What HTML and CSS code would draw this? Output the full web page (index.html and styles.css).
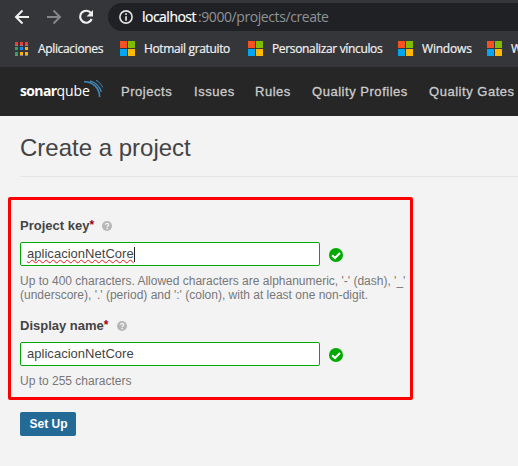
FILE: index.html
```html
<!DOCTYPE html>
<html lang="es">
<head>
<meta charset="utf-8">
<title>Create a project</title>
<link rel="stylesheet" href="styles.css">
</head>
<body>
<svg class="defs" width="0" height="0">
  <symbol id="ms" viewBox="0 0 15 15"><path fill="#f8501e" d="M0 0h7v7H0z"/><path fill="#80bb02" d="M8 0h7v7H8z"/><path fill="#02a5ef" d="M0 8h7v7H0z"/><path fill="#ffb902" d="M8 8h7v7H8z"/></symbol>
  <symbol id="help" viewBox="0 0 10 10"><circle cx="5" cy="5" r="5" fill="#b6b6b6"/><path d="M3.400 3.800C3.400 1.900 6.700 2 6.700 3.900 6.700 5 5.100 5 5.100 6.200M5.100 7v1.300" fill="none" stroke="#f3f3f3" stroke-width="1.400"/></symbol>
  <symbol id="ok" viewBox="0 0 14 14"><circle cx="7" cy="7" r="7" fill="#0a0"/><path d="M3.100 7.200l2.900 2.800 5-5" fill="none" stroke="#fff" stroke-width="2.100"/></symbol>
</svg>
<div class="toolbar">
  <svg class="controls" width="108" height="34" viewBox="0 0 108 34" fill="none" stroke-width="2">
    <path d="M29 17H16.500M22.500 10.500L16 17l6.500 6.500" stroke="#f1f1f1"/>
    <path d="M47 17h12.500M53.500 10.500L60 17l-6.500 6.500" stroke="#85868a"/>
    <path d="M91 13.200A6 6 0 1 0 91.700 19" stroke="#f1f1f1" stroke-width="2.200"/>
    <path d="M93 10v6.500h-6.500z" fill="#f1f1f1"/>
  </svg>
  <div class="address">
    <svg width="14" height="14" viewBox="0 0 14 14"><circle cx="7" cy="7" r="6.100" fill="none" stroke="#e4e4e4" stroke-width="1.600"/><path d="M6.200 3.300h1.700V5H6.200zM6.200 6.200h1.700v4.600H6.200z" fill="#e4e4e4"/></svg>
    <span class="host">localhost</span><span class="path">:9000/projects/create</span>
  </div>
</div>
<div class="bookmarks">
  <div class="bookmark apps">
    <svg width="13" height="14" viewBox="0 0 13 14"><path fill="#f23c35" d="M0 0h3v3H0zM5 0h3v3H5zM10 0h3v3h-3z"/><path fill="#2da55c" d="M0 5h3v3H0zM0 10h3v3H0z"/><path fill="#1e88f5" d="M5 5h3v3H5z"/><path fill="#fbb016" d="M10 5h3v3h-3zM5 10h3v3H5zM10 10h3v3h-3z"/><path fill="#858585" d="M0 3h3v1H0zM5 3h3v1H5zM10 3h3v1h-3zM0 13h3v1H0zM5 13h3v1H5zM10 13h3v1h-3z"/></svg>
    <span>Aplicaciones</span>
  </div>
  <div class="bookmark hotmail"><svg width="15" height="15"><use href="#ms"/></svg><span>Hotmail gratuito</span></div>
  <div class="bookmark links"><svg width="15" height="15"><use href="#ms"/></svg><span>Personalizar vínculos</span></div>
  <div class="bookmark windows"><svg width="15" height="15"><use href="#ms"/></svg><span>Windows</span></div>
  <div class="bookmark"><svg width="15" height="15"><use href="#ms"/></svg><span>W</span></div>
</div>
<nav class="nav">
  <div class="logo"><span class="sonar">sonar</span><span class="qube">qube</span>
    <svg width="20" height="18" viewBox="0 0 20 18" fill="none" stroke="#4289b8"><path d="M0 1.700C9 1.500 15.400 8 15.700 17" stroke-width="1.600"/><path d="M6 .8C12 2.500 16 7 17.500 12" stroke-width="1.200"/><path d="M12 .3c3.200 1.600 5.300 4 6.700 7" /></svg>
  </div>
  <a class="projects">Projects</a><a class="issues">Issues</a><a class="rules">Rules</a><a class="profiles">Quality Profiles</a><a class="gates">Quality Gates</a>
</nav>
<main class="page">
  <h1>Create a project</h1>
  <form>
    <div class="fields">
      <div class="field key">
        <label>Project key<em>*</em><svg width="10" height="10"><use href="#help"/></svg></label>
        <div class="control"><div class="input"><span class="typed">aplicacionNetCore</span><i class="caret"></i></div><svg width="14" height="14"><use href="#ok"/></svg></div>
        <p>Up to 400 characters. Allowed characters are alphanumeric, '-' (dash), '_'<br>(underscore), '.' (period) and ':' (colon), with at least one non-digit.</p>
      </div>
      <div class="field">
        <label>Display name<em>*</em><svg width="10" height="10"><use href="#help"/></svg></label>
        <div class="control"><div class="input"><span>aplicacionNetCore</span></div><svg width="14" height="14"><use href="#ok"/></svg></div>
        <p>Up to 255 characters</p>
      </div>
    </div>
    <button type="button">Set Up</button>
  </form>
</main>
</body>
</html>
```

FILE: styles.css
```css
* { box-sizing: border-box; }
body { margin: 0; height: 466px; overflow: hidden; background: #f3f3f3; color: #444; font-family: "Liberation Sans", Arial, sans-serif; font-size: 13px; white-space: nowrap; }
svg { flex: none; display: block; }
.defs { position: absolute; }

.toolbar { display: flex; height: 34px; background: #35363a; }
.address { flex: 1; height: 28px; margin-top: 3px; padding-left: 11px; display: flex; align-items: center; background: #202124; border-radius: 14px 0 0 14px; font: 14px/28px "Open Sans", "Noto Sans", sans-serif; color: #8f9398; }
.address svg { margin-right: 9px; }
.host { width: 56px; color: #fff; letter-spacing: -0.52px; -webkit-text-stroke: 0.2px #fff; }
.path { letter-spacing: -0.42px; }

.bookmarks { display: flex; align-items: flex-start; height: 33px; padding: 7px 0 0 15px; background: #35363a; color: #f2f2f2; font: 12px/16px "Open Sans", "Noto Sans", sans-serif; letter-spacing: -0.35px; -webkit-text-stroke: 0.2px #f2f2f2; }
.bookmark { display: flex; flex: none; gap: 9px; }
.apps { width: 105px; gap: 10px; }
.apps svg { margin-top: 1px; }
.hotmail { width: 128px; }
.links { width: 150px; }
.windows { width: 89px; letter-spacing: -0.2px; }

.nav { display: flex; height: 49px; padding-left: 20px; background: #262626; color: #ccc; font-size: 13px; line-height: 49px; }
.nav a { flex: none; letter-spacing: 0.53px; -webkit-text-stroke: 0.3px #ccc; }
.logo { position: relative; width: 101px; flex: none; color: #fff; font: 14px/48px "Open Sans", sans-serif; }
.sonar { font-weight: 700; letter-spacing: -0.65px; }
.qube { letter-spacing: 0; }
.logo svg { position: absolute; left: 64px; top: 13px; }
.nav .projects { width: 73px; }
.nav .issues { width: 61px; }
.nav .rules { width: 57px; }
.nav .profiles { width: 117px; }

.page { padding: 0 0 0 20px; }
h1 { margin: 0; height: 61px; padding-top: 18px; border-bottom: 1px solid #e6e6e6; font-size: 24px; line-height: 28px; font-weight: 400; }
.fields { width: 405px; height: 203px; margin: 20px 0 0 -12px; padding: 15px 0 0 9px; border: 3px solid #f00; border-radius: 2px; }
.key { height: 100px; }
label { display: flex; height: 27px; padding-top: 1px; line-height: 20px; font-weight: 700; }
label em { color: #a4030f; font-style: normal; font-size: 12px; line-height: 18px; }
label svg { margin: 5px 0 0 8px; }
.control { display: flex; align-items: center; gap: 9px; }
.control > svg { margin-top: 2px; }
.input { display: flex; align-items: center; width: 300px; height: 24px; padding-left: 6px; background: #fff; border: 1px solid #0a0; border-radius: 2px; font-size: 13px; line-height: 20px; }
.input span { letter-spacing: 0.03px; }
.typed { text-decoration: underline wavy #e51414 1px; text-underline-offset: 1px; text-decoration-skip-ink: none; }
.caret { width: 1px; height: 15px; background: #222; }
p { margin: 8px 0 0; color: #777; font-size: 12px; line-height: 14px; }
button { display: block; width: 56px; height: 24px; margin-top: 12px; padding: 0 0 0 1px; border: 0; border-radius: 2px; background: #236a97; color: #fff; font: 700 12px/24px "Liberation Sans", sans-serif; }
```
